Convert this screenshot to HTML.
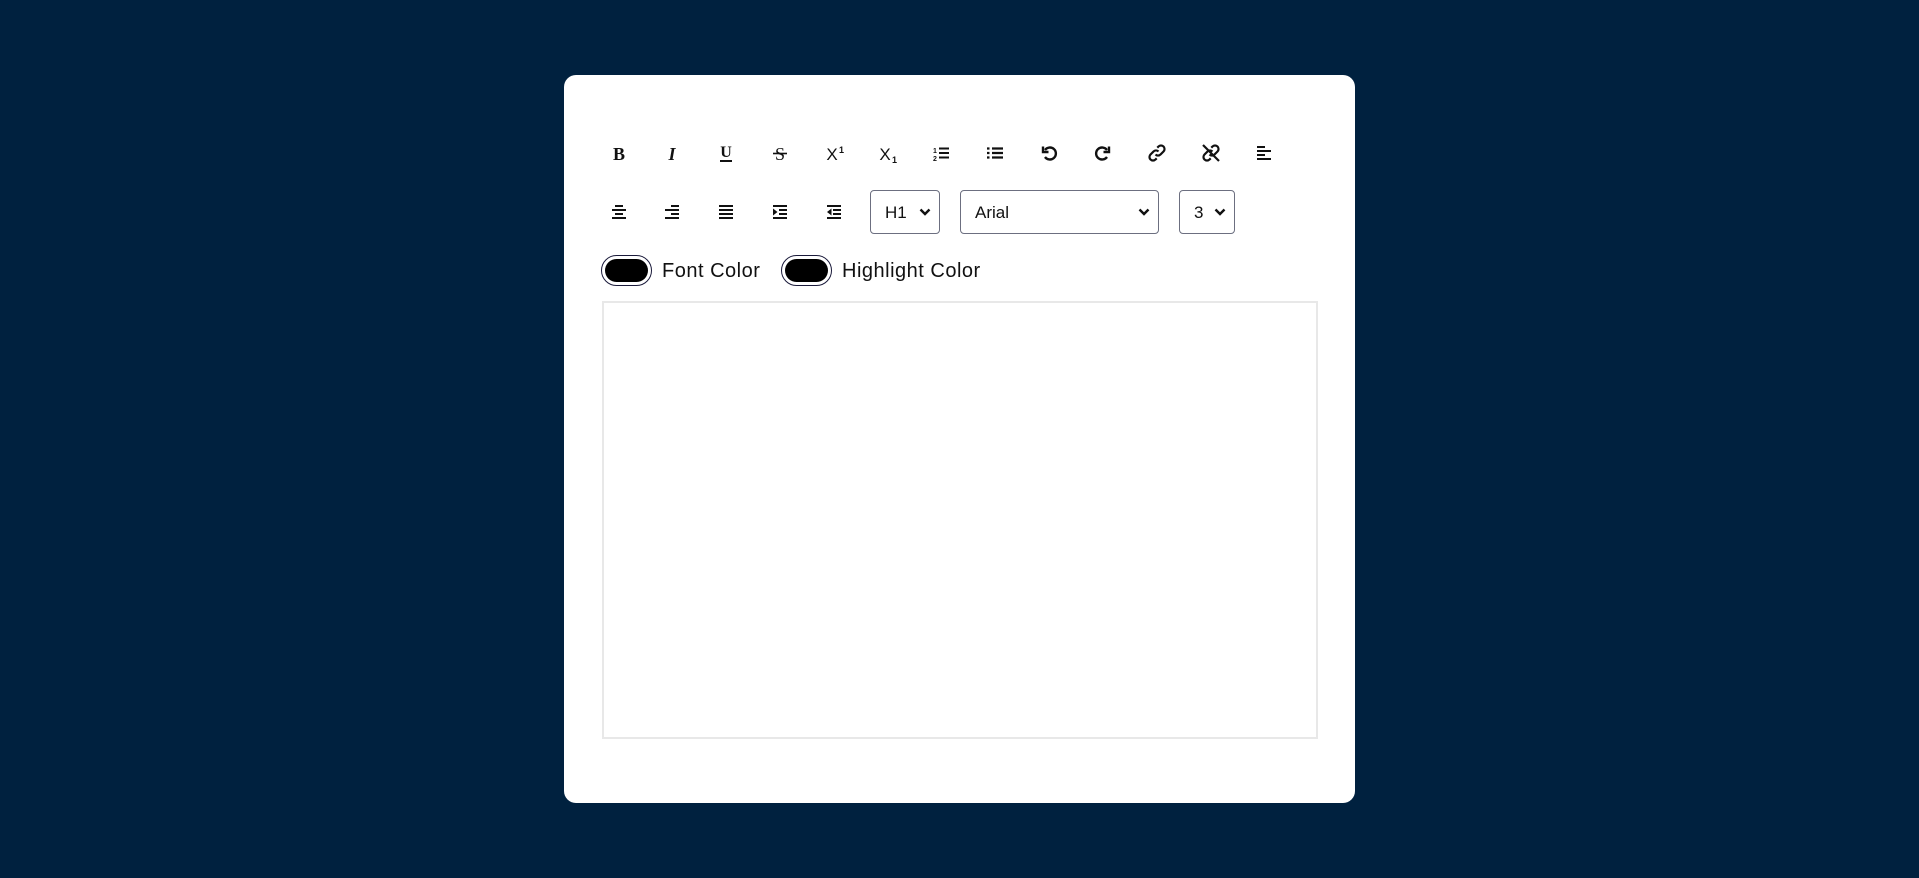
<!DOCTYPE html>
<html><head><style>
html,body{margin:0;padding:0;}
body{width:1919px;height:878px;background:#00213f;position:relative;overflow:hidden;font-family:"Liberation Sans",sans-serif;}
.card{position:absolute;left:564px;top:75px;width:791px;height:728px;background:#fff;border-radius:12px;}
.ic{position:absolute;width:24px;height:24px;transform:translate(-12px,-12px);}
.ic svg{width:24px;height:24px;display:block}
.sel{position:absolute;border:1.5px solid #6c6f80;border-radius:4px;box-sizing:border-box;height:44px;top:190px;font-size:17px;color:#111;}
.sel span{position:absolute;left:14px;top:12px;}
.sel svg{position:absolute;right:8px;top:17px;}
.sw{position:absolute;width:51px;height:31px;border:1.5px solid #1a1a3a;border-radius:16px;box-sizing:border-box;top:255px;}
.sw div{position:absolute;left:3px;top:3px;right:3px;bottom:3px;background:#000;border-radius:12px;}
.lab{position:absolute;top:260px;font-size:20px;color:#111;letter-spacing:0.5px;}
.ed{position:absolute;left:602px;top:301px;width:716px;height:438px;border:2px solid #e8e8e8;box-sizing:border-box;}
</style></head><body>
<div class="card"></div>
<svg width="0" height="0" style="position:absolute"><defs>
<symbol id="chev" viewBox="0 0 12 8"><path d="M1.5 1.5 6 6 10.5 1.5" stroke="#111" stroke-width="2.4" fill="none"/></symbol>
</defs></svg>
<!-- Row 1 -->
<div class="ic" style="left:619px;top:153px"><svg viewBox="0 0 24 24"><text x="12" y="19" text-anchor="middle" font-family="Liberation Serif" font-weight="bold" font-size="18" fill="#111">B</text></svg></div>
<div class="ic" style="left:672px;top:153px"><svg viewBox="0 0 24 24"><text x="12" y="19" text-anchor="middle" font-family="Liberation Serif" font-style="italic" font-weight="bold" font-size="18" fill="#111">I</text></svg></div>
<div class="ic" style="left:726px;top:153px"><svg viewBox="0 0 24 24"><text x="12" y="16" text-anchor="middle" font-family="Liberation Serif" font-weight="bold" font-size="16" fill="#111">U</text><path d="M6 20h12" stroke="#111" stroke-width="2"/></svg></div>
<div class="ic" style="left:780px;top:153px"><svg viewBox="0 0 24 24"><text x="12" y="19" text-anchor="middle" font-family="Liberation Serif" font-size="18" fill="#111">S</text><path d="M5 12.5h14" stroke="#111" stroke-width="1.6"/></svg></div>
<div class="ic" style="left:834px;top:153px"><svg viewBox="0 0 24 24"><text x="10" y="19" text-anchor="middle" font-family="Liberation Sans" font-size="17" fill="#111">X</text><text x="17" y="12" font-family="Liberation Sans" font-weight="bold" font-size="9" fill="#111">1</text></svg></div>
<div class="ic" style="left:887px;top:153px"><svg viewBox="0 0 24 24"><text x="10" y="19" text-anchor="middle" font-family="Liberation Sans" font-size="17" fill="#111">X</text><text x="17" y="22" font-family="Liberation Sans" font-weight="bold" font-size="9" fill="#111">1</text></svg></div>
<div class="ic" style="left:941px;top:153px"><svg viewBox="0 0 24 24"><text x="4" y="12" font-size="7" font-weight="bold" fill="#111">1</text><text x="4" y="20" font-size="7" font-weight="bold" fill="#111">2</text><path d="M10 7.5h10M10 12h10M10 16.5h10" stroke="#111" stroke-width="2"/></svg></div>
<div class="ic" style="left:995px;top:153px"><svg viewBox="0 0 24 24"><path d="M4 7.5h2.5M4 12h2.5M4 16.5h2.5M9 7.5h11M9 12h11M9 16.5h11" stroke="#111" stroke-width="2.2"/></svg></div>
<div class="ic" style="left:1049px;top:153px"><svg viewBox="0 0 24 24"><path d="M8 9a6 6 0 1 1 0 7" stroke="#111" stroke-width="2.4" fill="none"/><path d="M6 5.5v5.5h5.5" stroke="#111" stroke-width="2.4" fill="none"/></svg></div>
<div class="ic" style="left:1103px;top:153px"><svg viewBox="0 0 24 24"><path d="M16 9a6 6 0 1 0 0 7" stroke="#111" stroke-width="2.4" fill="none"/><path d="M18 5.5v5.5h-5.5" stroke="#111" stroke-width="2.4" fill="none"/></svg></div>
<div class="ic" style="left:1157px;top:153px"><svg viewBox="0 0 24 24"><path d="M10.5 13.5a3.5 3.5 0 0 0 5 0l3-3a3.5 3.5 0 0 0-5-5l-1.2 1.2M13.5 10.5a3.5 3.5 0 0 0-5 0l-3 3a3.5 3.5 0 0 0 5 5l1.2-1.2" stroke="#111" stroke-width="2.2" fill="none"/></svg></div>
<div class="ic" style="left:1211px;top:153px"><svg viewBox="0 0 24 24"><path d="M10.5 13.5a3.5 3.5 0 0 0 5 0l3-3a3.5 3.5 0 0 0-5-5l-1.2 1.2M13.5 10.5a3.5 3.5 0 0 0-5 0l-3 3a3.5 3.5 0 0 0 5 5l1.2-1.2M4 4l16 16" stroke="#111" stroke-width="2.2" fill="none"/></svg></div>
<div class="ic" style="left:1264px;top:153px"><svg viewBox="0 0 24 24"><path d="M5 6h8M5 10h14M5 14h8M5 18h14" stroke="#111" stroke-width="2"/></svg></div>
<!-- Row 2 -->
<div class="ic" style="left:619px;top:212px"><svg viewBox="0 0 24 24"><path d="M8 6h8M5 10h14M8 14h8M5 18h14" stroke="#111" stroke-width="2"/></svg></div>
<div class="ic" style="left:672px;top:212px"><svg viewBox="0 0 24 24"><path d="M11 6h8M5 10h14M11 14h8M5 18h14" stroke="#111" stroke-width="2"/></svg></div>
<div class="ic" style="left:726px;top:212px"><svg viewBox="0 0 24 24"><path d="M5 6h14M5 10h14M5 14h14M5 18h14" stroke="#111" stroke-width="2"/></svg></div>
<div class="ic" style="left:780px;top:212px"><svg viewBox="0 0 24 24"><path d="M5 6h14M11 10h8M11 14h8M5 18h14" stroke="#111" stroke-width="2"/><path d="M5 8.5l4.5 3.5-4.5 3.5z" fill="#111"/></svg></div>
<div class="ic" style="left:834px;top:212px"><svg viewBox="0 0 24 24"><path d="M5 6h14M11 10h8M11 14h8M5 18h14" stroke="#111" stroke-width="2"/><path d="M9.5 8.5l-4.5 3.5 4.5 3.5z" fill="#111"/></svg></div>
<div class="sel" style="left:870px;width:70px"><span>H1</span><svg width="12" height="8"><use href="#chev"/></svg></div>
<div class="sel" style="left:960px;width:199px"><span>Arial</span><svg width="12" height="8"><use href="#chev"/></svg></div>
<div class="sel" style="left:1179px;width:56px"><span>3</span><svg width="12" height="8"><use href="#chev"/></svg></div>
<!-- colors -->
<div class="sw" style="left:601px"><div></div></div>
<div class="lab" style="left:662px">Font Color</div>
<div class="sw" style="left:781px"><div></div></div>
<div class="lab" style="left:842px">Highlight Color</div>
<div class="ed"></div>
</body></html>
